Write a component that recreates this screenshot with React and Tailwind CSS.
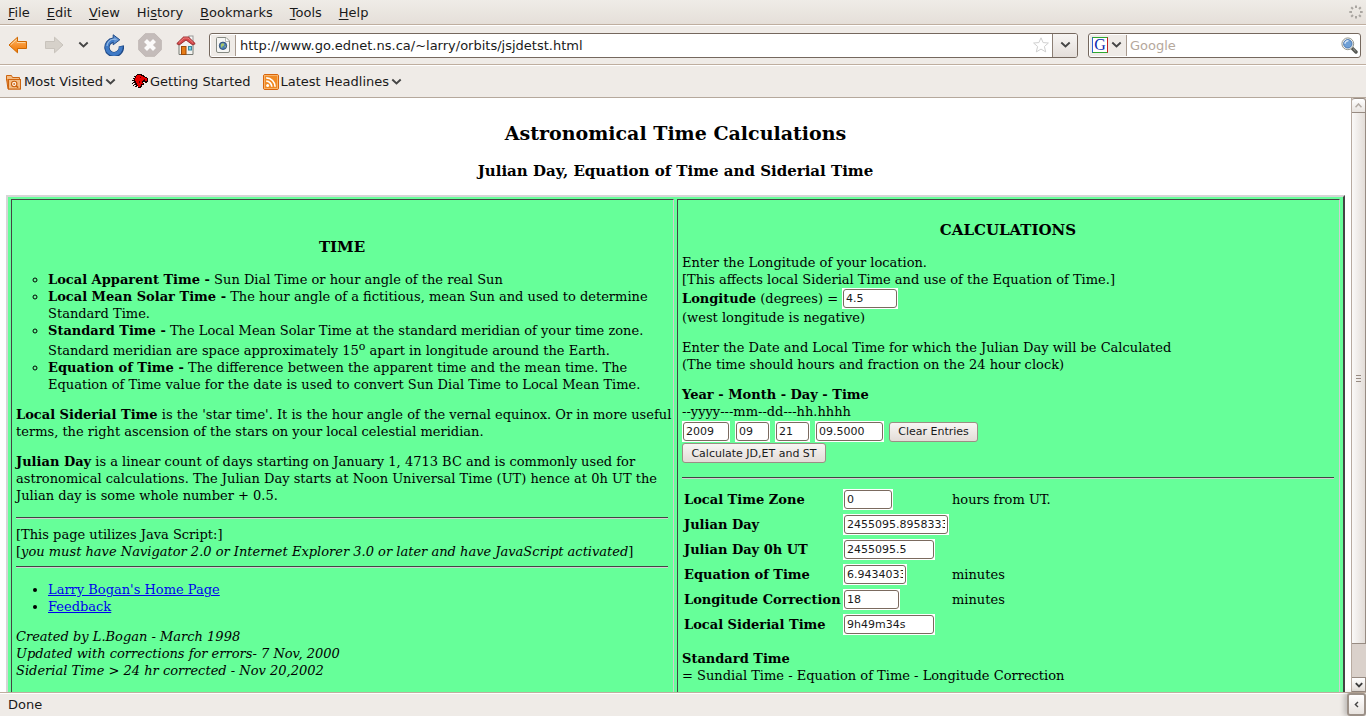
import React from "react";

function Chevron({ className = "" }) {
  return (
    <svg width="11" height="8" viewBox="0 0 11 8" className={className} aria-hidden="true">
      <path d="M1.3 1.5 L5.5 5.5 L9.7 1.5" fill="none" stroke="#454545" strokeWidth="1.9" />
    </svg>
  );
}

function BackIcon() {
  return (
    <svg width="20" height="18" viewBox="0 0 20 18" aria-hidden="true">
      <defs>
        <linearGradient id="back" x1="0" y1="0" x2="0" y2="1">
          <stop offset="0" stopColor="#fdc27a" />
          <stop offset="0.5" stopColor="#f79432" />
          <stop offset="1" stopColor="#f07800" />
        </linearGradient>
      </defs>
      <path d="M9.5 1.2 L1 9 L9.5 16.8 V12.5 H18.5 V5.5 H9.5 Z" fill="url(#back)" stroke="#cf6700" strokeLinejoin="round" />
      <path d="M8.6 3.4 L2.6 9 M9 6.5 H17.4" fill="none" stroke="#fdd9a8" strokeWidth="0.9" />
    </svg>
  );
}

function ForwardIcon() {
  return (
    <svg width="20" height="18" viewBox="0 0 20 18" aria-hidden="true">
      <path d="M10.5 1.2 L19 9 L10.5 16.8 V12.5 H1.5 V5.5 H10.5 Z" fill="#d6d1ca" stroke="#c8c3bc" strokeLinejoin="round" />
    </svg>
  );
}

function ReloadIcon() {
  return (
    <svg width="20" height="22" viewBox="0 0 20 22" aria-hidden="true">
      <path d="M17.2 11.8 A7.2 7.2 0 1 1 9.5 6.2" fill="none" stroke="#204a87" strokeWidth="5.4" />
      <path d="M9.2 0.8 L15.8 5.8 L9.2 10.8 Z" fill="#5e90d0" stroke="#204a87" strokeLinejoin="round" />
      <path d="M16.9 12.5 A7 7 0 1 1 10.2 6.2" fill="none" stroke="#3f7ac6" strokeWidth="3.6" />
      <path d="M3 12 A7.2 7.2 0 0 1 9.5 5.2 L12.5 5.4" fill="none" stroke="#8fb5e2" strokeWidth="1.3" />
    </svg>
  );
}

function StopIcon() {
  return (
    <svg width="24" height="24" viewBox="0 0 24 24" aria-hidden="true">
      <path d="M7.2 0.7 H16.8 L23.3 7.2 V16.8 L16.8 23.3 H7.2 L0.7 16.8 V7.2 Z" fill="#c4bcba" stroke="#c0b8b5" />
      <path d="M7.5 7.5 L16.5 16.5 M16.5 7.5 L7.5 16.5" stroke="#fbfafa" strokeWidth="4.2" />
    </svg>
  );
}

function HomeIcon() {
  return (
    <svg width="20" height="21" viewBox="0 0 20 21" aria-hidden="true">
      <rect x="13" y="1" width="4" height="6" fill="#f4f4f2" stroke="#999" />
      <path d="M3 9 L10 3.5 L17 9 V19.5 H3 Z" fill="#f3f2ef" stroke="#777a73" />
      <rect x="5.5" y="11.5" width="4.5" height="8" fill="#e67c17" stroke="#9e4a05" />
      <rect x="12.5" y="11.5" width="3" height="3.5" fill="#73d5e8" stroke="#3b89a0" />
      <path d="M0.8 8.6 L7.5 2 H12.5 L19.2 8.6 L17.8 9.6 H16.2 L10 5 L3.8 9.6 H2.2 Z" fill="#d8494b" stroke="#8f2224" strokeWidth="0.9" strokeLinejoin="round" />
      <path d="M3 7.5 L8 3 H12 L17 7.5" fill="none" stroke="#ee8e8e" strokeWidth="0.8" />
    </svg>
  );
}

function PageIcon() {
  return (
    <svg width="14" height="16" viewBox="0 0 14 16" aria-hidden="true">
      <path d="M1.5 0.5 H10 L13.5 4 V14 A1.5 1.5 0 0 1 12 15.5 H2 A1.5 1.5 0 0 1 0.5 14 V1.5 A1 1 0 0 1 1.5 0.5 Z" fill="#f6f6f4" stroke="#868a83" />
      <path d="M9.5 0.8 V4.5 H13.2" fill="#fff" stroke="#b9bbb5" />
      <circle cx="7" cy="8.8" r="3.7" fill="#4a7fb8" stroke="#2b4a70" strokeWidth="0.9" />
      <path d="M5 7 Q7 5.5 8.5 7.2 Q8 9 6.5 9.2 Q6.5 11 5.4 10.8 Q4.4 9 5 7 Z M8.6 9 L10 9.2 L9 11 Z" fill="#a9c66a" />
    </svg>
  );
}

function StarIcon() {
  return (
    <svg width="16" height="16" viewBox="0 0 16 16" aria-hidden="true">
      <path d="M8 0.8 L10.1 5.6 L15.4 6 L11.4 9.5 L12.7 14.9 L8 12.1 L3.3 14.9 L4.6 9.5 L0.6 6 L5.9 5.6 Z" fill="#fff" stroke="#cfcfcf" strokeLinejoin="round" />
    </svg>
  );
}

function SearchIcon() {
  return (
    <svg width="17" height="17" viewBox="0 0 17 17" aria-hidden="true">
      <path d="M10.6 10.6 L15 15" stroke="#555753" strokeWidth="3.4" strokeLinecap="round" />
      <path d="M12.2 11.8 L14.6 14.2" stroke="#a5a7a2" strokeWidth="1" />
      <circle cx="6.8" cy="6.8" r="5.9" fill="#f2f2f0" stroke="#93968f" />
      <circle cx="6.8" cy="6.8" r="4.2" fill="#6fa0d6" stroke="#3f71ae" strokeWidth="0.9" />
      <path d="M4 6.8 A3 3 0 0 1 7.5 3.8" fill="none" stroke="#d5e5f6" strokeWidth="1.5" />
    </svg>
  );
}

function Throbber() {
  return (
    <svg width="14" height="14" viewBox="0 0 14 14" aria-hidden="true">
      <g stroke="#aaa6a1" strokeWidth="2">
        <path d="M7 0.5 V3 M7 11 V13.5 M0.3 7 H3 M11 7 H13.7 M2.2 2.2 L4 4 M10 10 L11.8 11.8 M11.8 2.2 L10 4 M4 10 L2.2 11.8" />
      </g>
    </svg>
  );
}

function FolderIcon() {
  return (
    <svg width="16" height="16" viewBox="0 0 16 16" aria-hidden="true">
      <path d="M0.5 1.5 H5.5 L6.5 3.5 H13.5 V6 H0.5 Z" fill="#f4bd85" stroke="#cd640f" />
      <path d="M0.5 4.5 L2 15 H14.5 V5.5 H2" fill="#e98f42" stroke="#cd640f" />
      <rect x="2.5" y="5.5" width="12" height="9.5" fill="#f4bd85" stroke="#cd640f" />
      <circle cx="8.2" cy="10" r="2.7" fill="#fdf3e8" stroke="#c8600d" strokeWidth="1.1" />
      <circle cx="8.2" cy="10" r="1" fill="#d67526" />
      <path d="M10.2 12 L12.2 13.6" stroke="#c8600d" strokeWidth="1.6" />
    </svg>
  );
}

function DinosaurIcon() {
  return (
    <svg width="16" height="15" viewBox="0 0 16 15" shapeRendering="crispEdges" aria-hidden="true">
      <path
        d="M4 1 H6 V2 H4 Z M2 2 H4 V3 H2 Z M1 4 H3 V5 H1 Z M0 6 H2 V7 H0 Z M1 8 H3 V9 H1 Z M0 9 H1 V10 H0 Z M2 10 H4 V11 H2 Z M1 11 H2 V12 H1 Z M3 12 H5 V13 H3 Z M5 0 H10 V1 H12 V2 H13 V3 H15 V4 H16 V8 H15 V9 H13 V8 H11 V9 H12 V11 H10 V13 H9 V14 H6 V12 H4 V10 H3 V8 H2 V4 H3 V2 H5 Z"
        fill="#1a0000"
      />
      <path
        d="M5 1 H9 V2 H11 V3 H13 V4 H15 V7 H13 V6 H11 V7 H10 V9 H11 V10 H9 V12 H8 V13 H6 V11 H5 V9 H4 V7 H3 V4 H4 V2 H5 Z"
        fill="#e80000"
      />
      <path d="M8 3 H9 V4 H8 Z M7 7 H8 V9 H7 Z M12 5 H13 V6 H12 Z" fill="#5a0000" />
    </svg>
  );
}

function FeedIcon() {
  return (
    <svg width="16" height="16" viewBox="0 0 16 16" aria-hidden="true">
      <rect x="0.5" y="0.5" width="15" height="15" rx="1.5" fill="#f08a24" stroke="#d9650b" />
      <rect x="1.5" y="1.5" width="13" height="13" fill="none" stroke="#f7b36a" />
      <circle cx="4.6" cy="11.4" r="1.5" fill="#fff" />
      <path d="M3.2 7.2 A5.6 5.6 0 0 1 8.8 12.8 M3.2 3.9 A8.9 8.9 0 0 1 12.1 12.8" fill="none" stroke="#fff" strokeWidth="1.7" />
    </svg>
  );
}

const MENUS = [
  ["", "F", "ile"],
  ["", "E", "dit"],
  ["", "V", "iew"],
  ["Hi", "s", "tory"],
  ["", "B", "ookmarks"],
  ["", "T", "ools"],
  ["", "H", "elp"],
];

function MenuBar() {
  return (
    <div className="flex h-[25px] shrink-0 items-center justify-between border-b border-[#bfae9f] bg-linear-to-b from-[#efece7] to-[#e5dfd9] pr-[3px] pl-2">
      <nav className="flex gap-[17px]">
        {MENUS.map(([before, key, after]) => (
          <button key={before + key + after} type="button">
            {before}
            <span className="underline underline-offset-2">{key}</span>
            {after}
          </button>
        ))}
      </nav>
      <Throbber />
    </div>
  );
}

function Toolbar() {
  return (
    <div className="flex h-10 shrink-0 items-center border-t border-b border-t-white border-b-[#bfae9f] pr-[5px] pl-2">
      <div className="flex w-[201px] shrink-0 items-center">
        <button type="button" aria-label="Back" className="w-9">
          <BackIcon />
        </button>
        <button type="button" aria-label="Forward" className="w-[34px]">
          <ForwardIcon />
        </button>
        <button type="button" aria-label="Recent pages" className="w-[26px]">
          <Chevron />
        </button>
        <button type="button" aria-label="Reload" className="w-[34px]">
          <ReloadIcon />
        </button>
        <button type="button" aria-label="Stop" className="w-[38px]">
          <StopIcon />
        </button>
        <button type="button" aria-label="Home">
          <HomeIcon />
        </button>
      </div>
      <div className="flex h-[25px] min-w-0 flex-1 items-stretch overflow-hidden rounded-[3px] border border-[#75685e] bg-white">
        <div className="m-px flex w-[25px] shrink-0 items-center justify-center border-r border-[#a89a8f] bg-[#efebe7]">
          <PageIcon />
        </div>
        <input
          aria-label="Location"
          className="min-w-0 flex-1 bg-transparent px-[3px] outline-none"
          defaultValue="http://www.go.ednet.ns.ca/~larry/orbits/jsjdetst.html"
        />
        <button type="button" aria-label="Bookmark this page" className="px-[3px]">
          <StarIcon />
        </button>
        <button
          type="button"
          aria-label="Show history"
          className="flex w-[25px] items-center justify-center border-l border-[#8c7f75] bg-linear-to-b from-[#f7f5f3] to-[#e4deda]"
        >
          <Chevron />
        </button>
      </div>
      <div className="ml-2.5 flex h-[25px] w-[273px] shrink-0 items-stretch overflow-hidden rounded-[3px] border border-[#75685e] bg-white">
        <button
          type="button"
          aria-label="Choose search engine"
          className="m-px flex w-[37px] items-center gap-[3px] border-r border-[#a89a8f] bg-[#efebe7] pl-0.5"
        >
          <span className="flex size-4 items-center justify-center border border-t-[#2ea82e] border-r-[#c52222] border-b-[#2ea82e] border-l-[#2f62d0] bg-white font-['Liberation_Serif',serif] text-[16px] leading-4 text-[#0c2bb0]">
            G
          </span>
          <Chevron />
        </button>
        <input
          aria-label="Search"
          placeholder="Google"
          className="min-w-0 flex-1 bg-transparent px-0.5 outline-none placeholder:text-[#b5a89c]"
        />
        <button type="button" aria-label="Search" className="pr-0.5">
          <SearchIcon />
        </button>
      </div>
    </div>
  );
}

function BookmarksBar() {
  return (
    <div className="flex h-[33px] shrink-0 items-center gap-3 border-t border-b border-t-white border-b-[#b5a89c] pl-1.5">
      <button type="button" className="flex w-[114px] items-center gap-0.5">
        <FolderIcon />
        Most Visited
        <Chevron />
      </button>
      <button type="button" className="flex items-center gap-0.5">
        <DinosaurIcon />
        Getting Started
      </button>
      <button type="button" className="flex items-center gap-0.5">
        <FeedIcon />
        Latest Headlines
        <Chevron />
      </button>
    </div>
  );
}

function Field({ label, id, value, className }) {
  return (
    <span className="inline-flex bg-white p-px align-middle">
      <input
        id={id}
        aria-label={label}
        defaultValue={value}
        className={
          "h-[19px] rounded-[3px] border border-[#7b6a5f] px-0.5 font-['DejaVu_Sans',sans-serif] text-[11px] text-[#1a1a1a] outline-none " +
          className
        }
      />
    </span>
  );
}

function PushButton({ children, className }) {
  return (
    <button
      type="button"
      className={
        "h-5 rounded-[3px] border border-[#9c8e84] bg-linear-to-b from-[#f8f6f4] to-[#e3dcd7] font-['DejaVu_Sans',sans-serif] text-[11px] whitespace-nowrap text-[#1a1a1a] " +
        className
      }
    >
      {children}
    </button>
  );
}

function Rule({ className = "" }) {
  return <hr className={"h-0.5 border-0 border-t border-b border-t-[#444] border-b-[#d0d0d0] " + className} />;
}

const CELL = "border border-t-[#444] border-r-[#d0d0d0] border-b-[#d0d0d0] border-l-[#444] pl-1 pr-[5px]";

function TimePanel() {
  return (
    <section className={CELL}>
      <h3 className="mt-[37px] text-center text-[15px] leading-5 font-bold">TIME</h3>
      <ul className="mt-3.5 list-[circle] pl-8">
        <li>
          <b>Local Apparent Time -</b> Sun Dial Time or hour angle of the real Sun
        </li>
        <li>
          <b>Local Mean Solar Time -</b> The hour angle of a fictitious, mean Sun and used to determine Standard Time.
        </li>
        <li>
          <b>Standard Time -</b> The Local Mean Solar Time at the standard meridian of your time zone.
          <span className="block pt-[3px]">
            Standard meridian are space approximately 15
            <sup className="text-[11px]">o</sup> apart in longitude around the Earth.
          </span>
        </li>
        <li>
          <b>Equation of Time -</b> The difference between the apparent time and the mean time. The Equation of Time
          value for the date is used to convert Sun Dial Time to Local Mean Time.
        </li>
      </ul>
      <p className="mt-[13px] -mr-1">
        <b>Local Siderial Time</b> is the 'star time'. It is the hour angle of the vernal equinox. Or in more useful
        terms, the right ascension of the stars on your local celestial meridian.
      </p>
      <p className="mt-[13px] -mr-1">
        <b>Julian Day</b> is a linear count of days starting on January 1, 4713 BC and is commonly used for
        astronomical calculations. The Julian Day starts at Noon Universal Time (UT) hence at 0h UT the Julian day is
        some whole number + 0.5.
      </p>
      <Rule className="mt-[13px] mb-[7px]" />
      <p>
        [This page utilizes Java Script:]
        <br />[<i>you must have Navigator 2.0 or Internet Explorer 3.0 or later and have JavaScript activated</i>]
      </p>
      <Rule className="mt-1.5 mb-[13px]" />
      <ul className="list-disc pl-8">
        <li>
          <a href="#home" className="text-[#0000ee] underline">
            Larry Bogan's Home Page
          </a>
        </li>
        <li>
          <a href="#feedback" className="text-[#0000ee] underline">
            Feedback
          </a>
        </li>
      </ul>
      <p className="mt-[13px] pb-8 italic">
        Created by L.Bogan - March 1998
        <br />
        Updated with corrections for errors- 7 Nov, 2000
        <br />
        Siderial Time &gt; 24 hr corrected - Nov 20,2002
      </p>
    </section>
  );
}

const RESULTS = [
  { id: "zone", label: "Local Time Zone", value: "0", width: "w-12", unit: "hours from UT." },
  { id: "jd", label: "Julian Day", value: "2455095.8958333335", width: "w-[104px]", unit: "" },
  { id: "jd0", label: "Julian Day 0h UT", value: "2455095.5", width: "w-[90px]", unit: "" },
  { id: "eot", label: "Equation of Time", value: "6.943403312", width: "w-[62px]", unit: "minutes" },
  { id: "corr", label: "Longitude Correction", value: "18", width: "w-[55px]", unit: "minutes" },
  { id: "lst", label: "Local Siderial Time", value: "9h49m34s", width: "w-[90px]", unit: "" },
];

function CalculationsPanel() {
  return (
    <section className={CELL}>
      <h3 className="mt-5 text-center text-[15px] leading-5 font-bold">CALCULATIONS</h3>
      <p className="mt-3.5">
        Enter the Longitude of your location.
        <br />
        [This affects local Siderial Time and use of the Equation of Time.]
      </p>
      <div className="flex items-center gap-1">
        <label htmlFor="longitude">
          <b>Longitude</b> (degrees) =
        </label>
        <Field id="longitude" value="4.5" className="w-[54px]" />
      </div>
      <p>(west longitude is negative)</p>
      <p className="mt-[13px]">
        Enter the Date and Local Time for which the Julian Day will be Calculated
        <br />
        (The time should hours and fraction on the 24 hour clock)
      </p>
      <p className="mt-[13px]">
        <b>Year - Month - Day - Time</b>
        <br />
        --yyyy---mm--dd---hh.hhhh
      </p>
      <div className="flex items-center gap-[5px] pt-px">
        <Field label="Year" value="2009" className="w-[46px]" />
        <Field label="Month" value="09" className="w-[33px]" />
        <Field label="Day" value="21" className="w-[33px]" />
        <Field label="Time" value="09.5000" className="w-[67px]" />
        <PushButton className="w-[89px]">Clear Entries</PushButton>
      </div>
      <div className="flex pt-px">
        <PushButton className="w-[144px]">Calculate JD,ET and ST</PushButton>
      </div>
      <Rule className="mt-3.5 mb-2" />
      <table className="text-left">
        <tbody>
          {RESULTS.map((r) => (
            <tr key={r.id} className="h-[25px]">
              <th scope="row" className="w-[161px] pl-0.5 font-bold whitespace-nowrap">
                <label htmlFor={r.id}>{r.label}</label>
              </th>
              <td className="w-[109px]">
                <div className="flex">
                  <Field id={r.id} value={r.value} className={r.width} />
                </div>
              </td>
              <td className="whitespace-nowrap">{r.unit}</td>
            </tr>
          ))}
        </tbody>
      </table>
      <p className="mt-[13px] pb-12">
        <b>Standard Time</b>
        <br />= Sundial Time - Equation of Time - Longitude Correction
      </p>
    </section>
  );
}

function ScrollBar() {
  return (
    <div className="flex w-[15px] shrink-0 flex-col border-l border-[#b8aba1] bg-[#dad1cb]">
      <button
        type="button"
        aria-label="Scroll up"
        className="flex h-[15px] items-center justify-center rounded-t-[3px] border border-l-0 border-[#978b82] bg-linear-to-b from-white to-[#e8e3df]"
      >
        <svg width="7" height="5" viewBox="0 0 7 5" aria-hidden="true">
          <path d="M0.5 4.3 L3.5 1 L6.5 4.3" fill="none" stroke="#b3aaa3" strokeWidth="1.5" />
        </svg>
      </button>
      <div className="flex flex-[530] flex-col items-center justify-center gap-0.5 border-r border-b border-[#978b82] bg-linear-to-r from-[#faf9f8] to-[#e3ddd8]">
        <span className="h-px w-[5px] bg-[#978b82]" />
        <span className="h-px w-[5px] bg-[#978b82]" />
        <span className="h-px w-[5px] bg-[#978b82]" />
      </div>
      <div className="flex-[33]" />
      <button
        type="button"
        aria-label="Scroll down"
        className="flex h-[15px] items-center justify-center border border-l-0 border-[#978b82] bg-linear-to-b from-white to-[#e3ddd8]"
      >
        <svg width="8" height="6" viewBox="0 0 8 6" aria-hidden="true">
          <path d="M0.8 1.2 L4 4.4 L7.2 1.2" fill="none" stroke="#3c3c3c" strokeWidth="1.9" />
        </svg>
      </button>
    </div>
  );
}

function StatusBar() {
  return (
    <footer className="flex h-6 shrink-0 border-t border-[#bfae9f]">
      <div className="flex flex-1 items-center justify-between border-t border-white pb-0.5 pl-2">
        <span>Done</span>
      </div>
      <button
        type="button"
        aria-label="Expand panel"
        className="flex w-[19px] items-center justify-center rounded-[3px] border-2 border-[#9c9188] bg-linear-to-b from-white to-[#e8e3df] shadow-[-3px_0_5px_#0003]"
      >
        <svg width="5" height="7" viewBox="0 0 5 7" aria-hidden="true">
          <path d="M4 1 L1.4 3.5 L4 6" fill="none" stroke="#444" strokeWidth="1.4" />
        </svg>
      </button>
    </footer>
  );
}

export default function App() {
  return (
    <div className="flex h-screen flex-col overflow-hidden bg-[#efebe7] font-['DejaVu_Sans',sans-serif] text-[13px] leading-[17px] text-[#1a1a1a]">
      <MenuBar />
      <Toolbar />
      <BookmarksBar />
      <div className="flex min-h-0 flex-1">
        <main className="min-w-0 flex-1 overflow-hidden bg-white px-1.5 font-['DejaVu_Serif',serif] text-black">
          <h1 className="mt-[23px] text-center text-[19px] leading-6 font-bold">Astronomical Time Calculations</h1>
          <h2 className="mt-4 text-center text-[15px] leading-5 font-bold">
            Julian Day, Equation of Time and Siderial Time
          </h2>
          <div className="mt-3.5 grid grid-cols-2 gap-[3px] border-2 border-t-[#d6d6d6] border-r-[#444] border-b-[#444] border-l-[#d6d6d6] bg-[#66ff99] px-[3px] py-0.5">
            <TimePanel />
            <CalculationsPanel />
          </div>
        </main>
        <ScrollBar />
      </div>
      <StatusBar />
    </div>
  );
}
